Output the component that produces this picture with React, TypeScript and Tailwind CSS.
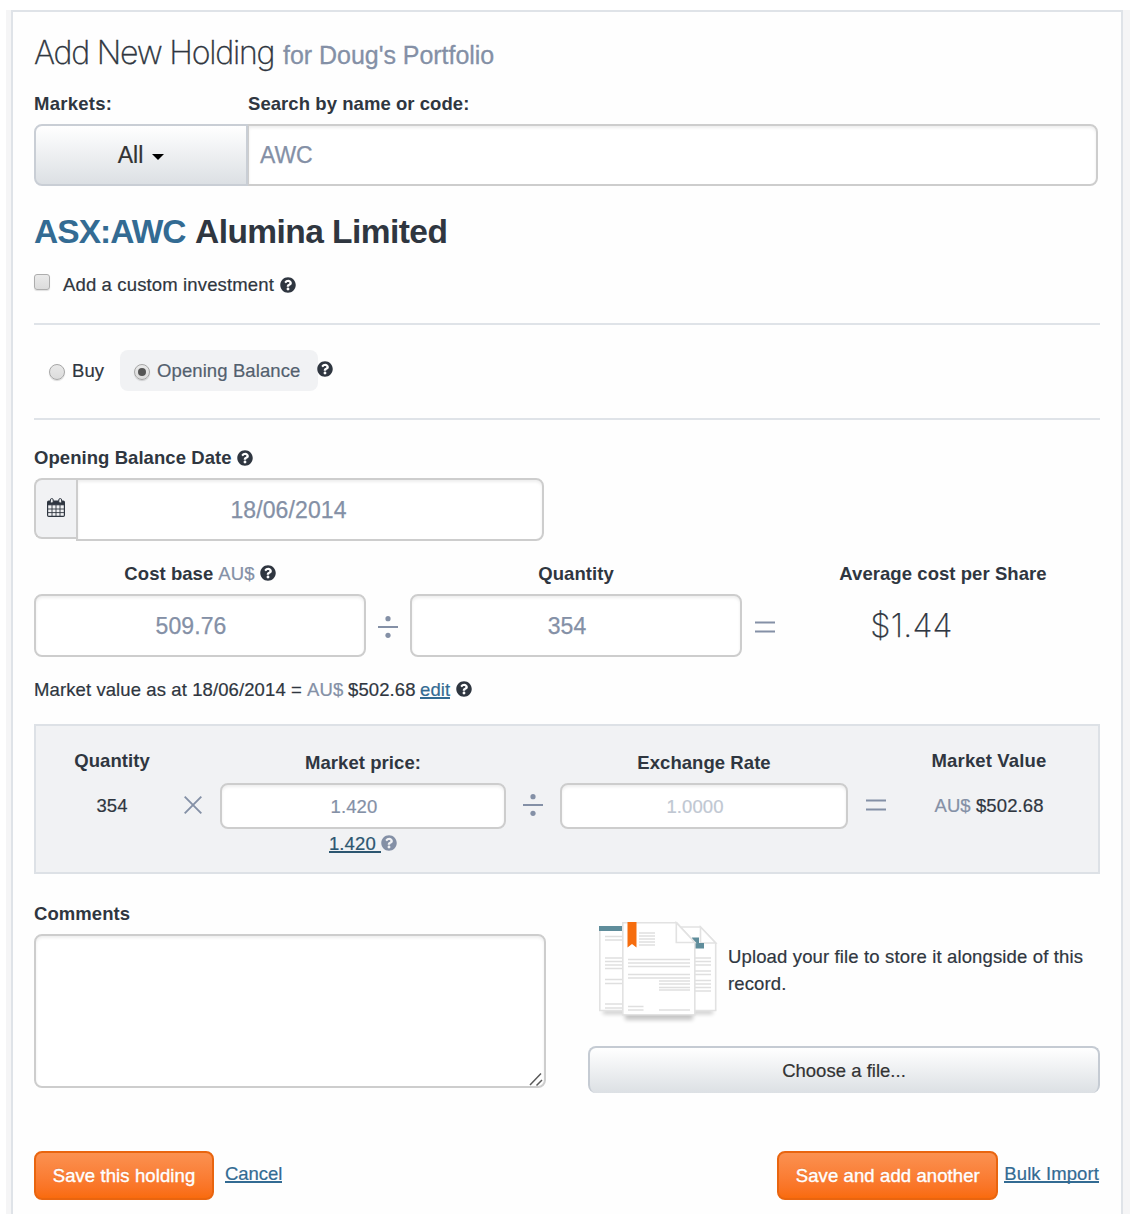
import React from "react";
import { FaQuestionCircle } from "react-icons/fa";

const field =
  "flex items-center justify-center rounded-[8px] border-2 border-[#cdcdcd] bg-white text-[#8490a6] shadow-[inset_0_2px_3px_rgba(0,0,0,0.07)]";

function Help({ className = "" }: { className?: string }) {
  return <FaQuestionCircle className={`h-4 w-4 shrink-0 ${className}`} />;
}

function Label({ children, className = "" }: { children: React.ReactNode; className?: string }) {
  return <span className={`font-bold tracking-[0.06px] [-webkit-text-stroke:0] ${className}`}>{children}</span>;
}

function Divide() {
  return (
    <svg viewBox="0 0 20 22" className="h-[22px] w-5 shrink-0 fill-[#8490a6]">
      <rect y="10" width="20" height="2" />
      <circle cx="10" cy="2.7" r="2.6" />
      <circle cx="10" cy="19.3" r="2.6" />
    </svg>
  );
}

function Equals() {
  return (
    <svg viewBox="0 0 20 12" className="h-3 w-5 shrink-0 fill-[#8490a6]">
      <rect width="20" height="2" y="0.5" />
      <rect width="20" height="2" y="9.5" />
    </svg>
  );
}

function Times() {
  return (
    <svg viewBox="0 0 18 18" className="h-[18px] w-[18px] shrink-0 stroke-[#8490a6]" strokeWidth="1.9">
      <path d="M.7.7 17.3 17.3M17.3.7.7 17.3" />
    </svg>
  );
}

function Calendar() {
  return (
    <svg viewBox="0 0 18 19" className="h-[19px] w-[18px]" fill="none" stroke="#2f3640">
      <rect x="0.6" y="3.2" width="16.8" height="15.2" rx="1.2" fill="#f1f2f4" strokeWidth="1.2" />
      <path d="M1 3.6h16v3.2H1z" fill="#2f3640" />
      <path d="M5 7v11M9 7v11M13 7v11M1 11h16M1 14.6h16" strokeWidth="0.9" />
      <rect x="3.4" y="0.6" width="2.8" height="4.4" rx="1.3" fill="#f1f2f4" strokeWidth="1" />
      <rect x="11.8" y="0.6" width="2.8" height="4.4" rx="1.3" fill="#f1f2f4" strokeWidth="1" />
    </svg>
  );
}

function Radio({ checked = false }: { checked?: boolean }) {
  return (
    <span className="mt-[3px] flex h-4 w-4 items-center justify-center rounded-full border border-[#a6a6a6] bg-linear-to-b from-[#e9e9e9] to-[#dcdcdc] shadow-[0_1px_1px_rgba(0,0,0,0.15)]">
      {checked && <span className="h-2 w-2 rounded-full bg-[#555]" />}
    </span>
  );
}

/* Stack of three sheets with a bookmark on the front one. */
function Documents() {
  return (
    <svg viewBox="0 0 118 104" className="h-[104px] w-[118px] shrink-0 overflow-visible">
      <defs>
        <filter id="soft" x="-20%" y="-100%" width="140%" height="300%">
          <feGaussianBlur stdDeviation="2.2" />
        </filter>
      </defs>
      <g filter="url(#soft)" fill="#000" opacity="0.22">
        <rect x="4" y="88" width="110" height="4" />
        <rect x="26" y="92" width="68" height="6" />
      </g>
      <g fill="#fff" stroke="#e2e2e2" strokeWidth="1.6">
        <path d="M.8 5h40v83.500H.8z" />
        <path d="M60 5h41.500l15.200 16v67.500H60z" />
        <path d="M101.500 5v16h15.200z" />
      </g>
      <path d="M0 4h24v5H0z" fill="#5f8d9b" />
      <path d="M93 15.500h7v5.500h5v5.500H94z" fill="#5f8d9b" />
      <g stroke="#dfdfdf" strokeWidth="1.3">
        <path d="M6 14.500h17M6 18h17M6 36h17M6 39.500h17M6 43h17M6 46.500h17M6 57.500h17M6 61.500h17M6 82h17M6 86h17" />
        <path d="M95 36h17M95 39.500h17M95 43h17M95 49h17M95 52.500h17M95 58.500h17M95 62h17M95 65.500h17M95 69h17" />
      </g>
      <path d="M23.800.8h54l18 19.700v72.300h-72z" fill="#fff" stroke="#e2e2e2" strokeWidth="1.6" />
      <path d="M77.300.8v19.700h18.500z" fill="#fff" stroke="#e2e2e2" strokeWidth="1.6" />
      <g stroke="#dfdfdf" strokeWidth="1.3">
        <path d="M40 11h16M40 14h16M40 17h16M40 20h16M40 23h16" />
        <path d="M29 37.500h62M29 41h62M29 44.500h62M29 52.500h62M29 56h62" />
        <path d="M60 59h31M60 62h31M60 65.500h31M60 68h31M29 84.500h15.500M29 88h15.500M60 88h31" />
      </g>
      <path d="M28.500 0h9v25.500L33 22l-4.500 3.500z" fill="#f66d0e" />
    </svg>
  );
}

function PrimaryButton({ children, className = "" }: { children: React.ReactNode; className?: string }) {
  return (
    <button
      className={`flex h-[49px] items-center justify-center rounded-[8px] border-2 border-[#e9650f] bg-linear-to-b from-[#fb9150] to-[#f96b0c] text-white [-webkit-text-stroke:0.4px] [text-shadow:0_-1px_0_rgba(0,0,0,0.12)] ${className}`}
    >
      {children}
    </button>
  );
}

function Link({ children, className = "" }: { children: React.ReactNode; className?: string }) {
  return (
    <a className={`h-[19px] whitespace-pre border-b-2 leading-[19px] ${className}`}>{children}</a>
  );
}

export default function App() {
  return (
    <div className="h-[1226px] w-[1134px] overflow-hidden bg-white pt-[10px] pl-[6px] font-['Liberation_Sans',Arial,sans-serif] text-[18.5px] leading-[27px] tracking-[0.1px] whitespace-nowrap text-[#2f3640] [-webkit-text-stroke:0.2px]">
      <div className="h-[1204px] w-[1124px] bg-[#f5f5f6] pr-[7px] pl-[5px]">
        <main className="h-full border-x-2 border-t-2 border-[#dfe3e8] bg-[#fefefe] pr-[21px] pl-[21px]">
          <h1 className="flex h-[80px] items-center pt-[3px]">
            <span className="flex items-baseline">
              <span className="w-[249px] font-['Inter',sans-serif] text-[32px] font-extralight tracking-[-1.2px] [-webkit-text-stroke:0.35px]">
                Add New Holding
              </span>
              <span className="text-[25px] tracking-[-0.03px] text-[#8490a6] [-webkit-text-stroke:0.3px]">
                for Doug's Portfolio
              </span>
            </span>
          </h1>

          <div className="grid h-[23px] grid-cols-[214px_1fr] leading-[23px]">
            <Label className="tracking-[0.25px]">Markets:</Label>
            <Label>Search by name or code:</Label>
          </div>
          <div className="mt-[9px] flex h-[62px] w-[1064px] text-[23px] tracking-normal">
            <button className="flex w-[214px] items-center justify-center gap-[9px] rounded-l-[8px] border-2 border-[#c9ced5] bg-linear-to-b from-white to-[#dce0e4] text-[#333]">
              <span className="[-webkit-text-stroke:0.2px]">All</span>
              <svg viewBox="0 0 12 6" className="mt-[4px] h-[6px] w-3 fill-black">
                <path d="M0 0h12L6 6z" />
              </svg>
            </button>
            <div className="flex flex-1 items-center rounded-r-[8px] border-2 border-l-[1px] border-[#cdcdcd] bg-white pl-[11px] text-[#8490a6] shadow-[inset_0_2px_3px_rgba(0,0,0,0.07)]">
              <span className="tracking-[-0.1px] [-webkit-text-stroke:0.25px]">AWC</span>
            </div>
          </div>

          <h2 className="mt-[25px] flex h-10 items-center text-[33.5px] font-bold [-webkit-text-stroke:0]">
            <span className="w-[161px] tracking-[-0.95px] text-[#336b93]">ASX:AWC</span>
            <span className="tracking-[-0.55px]">Alumina Limited</span>
          </h2>
          <div className="mt-[18px] flex h-[30px] items-center">
            <span className="mb-[4px] h-4 w-4 rounded-[3px] border border-[#adadad] bg-linear-to-b from-[#eaeaea] to-[#dcdcdc] shadow-[0_1px_1px_rgba(0,0,0,0.12)]" />
            <span className="ml-[13px] w-[217px] tracking-[0.14px]">Add a custom investment</span>
            <Help className="mt-[2px]" />
          </div>

          <div className="mt-[24px] flex h-[97px] items-start border-y-2 border-[#dfe3e8] pt-[25px]">
            <label className="flex h-[41px] w-[86px] items-center gap-[7px] pl-[15px]">
              <Radio />
              Buy
            </label>
            <label className="flex h-[41px] w-[198px] items-center gap-[7px] rounded-[8px] bg-[#f1f2f4] pl-[14px] text-[#53606e]">
              <Radio checked />
              Opening Balance
            </label>
            <Help className="mt-[11px] -ml-[1px]" />
          </div>

          <div className="mt-[22px] flex h-[30px] items-center">
            <Label className="w-[203px]">Opening Balance Date</Label>
            <Help className="mt-[2px]" />
          </div>
          <div className="mt-[6px] flex h-[63px] items-start">
            <div className="flex h-[61px] w-[42px] items-center justify-center rounded-l-[8px] border-2 border-r-0 border-[#cdcdcd] bg-[#f1f2f4] pb-[2px]">
              <Calendar />
            </div>
            <div className="flex h-[63px] w-[468px] items-center justify-center rounded-r-[8px] border-2 border-[#cdcdcd] bg-white pt-[2px] pr-[43px] text-[23px] tracking-[0.1px] text-[#8490a6] shadow-[inset_0_2px_3px_rgba(0,0,0,0.07)] [-webkit-text-stroke:0.25px]">
              18/06/2014
            </div>
          </div>

          <div className="mt-[17px] grid grid-cols-[332px_44px_332px_46px_1fr]">
            <div className="flex h-[30px] items-center justify-center">
              <Label>Cost base</Label>
              <span className="mr-[5px] ml-[5px] text-[#8490a6]">AU$</span>
              <Help />
            </div>
            <div />
            <div className="flex items-center justify-center">
              <Label>Quantity</Label>
            </div>
            <div />
            <div className="flex items-center justify-center pr-[2px]">
              <Label>Average cost per Share</Label>
            </div>
            <div className={`mt-[6px] h-[63px] pt-[2px] pr-[18px] text-[23px] [-webkit-text-stroke:0.25px] ${field}`}>509.76</div>
            <div className="flex items-center justify-center pt-[8px]">
              <Divide />
            </div>
            <div className={`mt-[6px] h-[63px] pt-[2px] pr-[18px] text-[23px] [-webkit-text-stroke:0.25px] ${field}`}>354</div>
            <div className="flex items-center justify-center pt-[8px]">
              <Equals />
            </div>
            <div className="flex items-center justify-center pt-[6px] pr-[65px] font-['Inter',sans-serif] text-[32.5px] font-extralight tracking-[0.2px] [-webkit-text-stroke:0.25px]">
              $1.44
            </div>
          </div>

          <p className="mt-[17px] flex h-[30px] items-center">
            <span className="w-[273px]">Market value as at 18/06/2014 =</span>
            <span className="w-[41px] text-[#8490a6]">AU$</span>
            <span className="w-[72px]">$502.68</span>
            <Link className="mt-[1px] mr-[6px] border-[#336b93] text-[#336b93]">edit</Link>
            <Help />
          </p>

          <section className="mt-[20px] grid h-[150px] grid-cols-[148px_36px_286px_54px_288px_54px_1fr] items-start border-2 border-[#dde1e6] bg-[#f1f2f4] pt-[20px]">
            <div className="flex flex-col items-center pl-1">
              <Label className="leading-[30px]">Quantity</Label>
              <span className="mt-[15px] leading-[30px]">354</span>
            </div>
            <div className="flex h-[122px] items-center pb-[4px]">
              <Times />
            </div>
            <div className="flex flex-col items-center">
              <Label className="leading-[34px] tracking-[0.2px]">Market price:</Label>
              <div className={`mt-[3px] h-[46px] w-[286px] pr-[18px] ${field}`}>1.420</div>
              <div className="mt-[5px] flex items-start">
                <Link className="border-[#2c5670] text-[#2c5670]">1.420 </Link>
                <Help className="mt-px text-[#8490a6]" />
              </div>
            </div>
            <div className="flex h-[122px] items-center justify-center pb-[4px]">
              <Divide />
            </div>
            <div className="flex flex-col items-center">
              <Label className="leading-[34px]">Exchange Rate</Label>
              <div className={`mt-[3px] h-[46px] w-[288px] pr-[18px] ${field}`}>
                <span className="text-[#c0c7d2]">1.0000</span>
              </div>
            </div>
            <div className="flex h-[122px] items-center justify-center pb-[4px] pl-[2px]">
              <Equals />
            </div>
            <div className="flex flex-col items-center pr-[22px]">
              <Label className="leading-[30px] tracking-[0.15px]">Market Value</Label>
              <span className="mt-[15px] leading-[30px]">
                <span className="text-[#8490a6]">AU$</span> $502.68
              </span>
            </div>
          </section>

          <div className="mt-[24px] grid grid-cols-[512px_512px] justify-between">
            <div>
              <div className="flex h-[30px] items-center">
                <Label className="tracking-[0.2px]">Comments</Label>
              </div>
              <div className={`mt-[6px] h-[154px] ${field}`}>
                <svg viewBox="0 0 14 14" className="mr-[1px] ml-auto h-[14px] w-[14px] self-end stroke-[#5a5a5a]" strokeWidth="1.5">
                  <path d="M1 13 12 1.500M7.500 13.500 13 8" />
                </svg>
              </div>
            </div>
            <div>
              <div className="mt-[24px] flex h-[104px] pl-[11px]">
                <Documents />
                <p className="ml-[11px] w-[365px] pt-[21px] leading-[27px] tracking-[0.14px] whitespace-normal">
                  Upload your file to store it alongside of this record.
                </p>
              </div>
              <button className="mt-[20px] flex h-[47px] w-full items-center justify-center rounded-[8px] border-2 border-b-0 border-[#c5cbd3] bg-linear-to-b from-white to-[#dce0e4] tracking-[0.02px] text-[#333]">
                Choose a file...
              </button>
            </div>
          </div>

          <div className="mt-[58px] flex h-[49px] items-start pr-px">
            <PrimaryButton className="w-[180px]">Save this holding</PrimaryButton>
            <Link className="mt-[13px] ml-[11px] border-[#336b93] tracking-[-0.05px] text-[#336b93]">Cancel</Link>
            <PrimaryButton className="ml-auto w-[221px]">Save and add another</PrimaryButton>
            <Link className="mt-[13px] ml-[6px] border-[#336b93] text-[#336b93]">Bulk Import</Link>
          </div>
        </main>
      </div>
    </div>
  );
}
